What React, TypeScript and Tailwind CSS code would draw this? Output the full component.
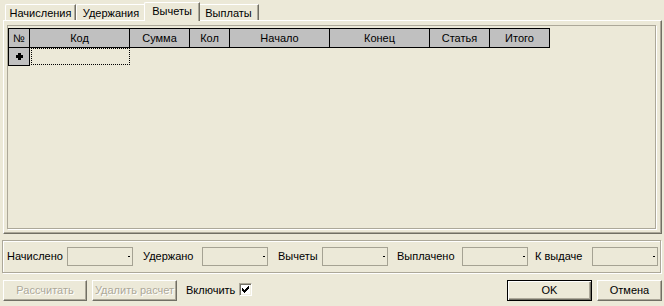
import React from "react";

const cols = [
  { t: "Код", w: "w-[100px]" },
  { t: "Сумма", w: "w-[60px]" },
  { t: "Кол", w: "w-[40px]" },
  { t: "Начало", w: "w-[100px]" },
  { t: "Конец", w: "w-[100px]" },
  { t: "Статья", w: "w-[60px]" },
  { t: "Итого", w: "w-[60px]" },
];

function Field({ label, lw, ml }: { label: string; lw: string; ml: string }) {
  return (
    <div className={`flex items-center ${ml}`}>
      <div className={`${lw} leading-[13px] whitespace-nowrap`}>{label}</div>
      <div className="w-[66px] h-[19px] border border-[#A5A293] flex items-center justify-end pr-[2px]">
        <div className="w-[2px] h-[1px] bg-black" />
      </div>
    </div>
  );
}

const btn =
  "h-[21px] flex items-center justify-center border border-t-white border-l-white border-r-[#716F64] border-b-[#716F64] shadow-[inset_-1px_-1px_0_#ACA899] leading-[13px]";

function Check() {
  const px: [number, number][] = [
    [6, 0],
    [5, 1], [6, 1],
    [0, 2], [4, 2], [5, 2], [6, 2],
    [0, 3], [1, 3], [3, 3], [4, 3], [5, 3],
    [0, 4], [1, 4], [2, 4], [3, 4], [4, 4],
    [1, 5], [2, 5], [3, 5],
    [2, 6],
  ];
  return (
    <svg width="7" height="7" viewBox="0 0 7 7" shapeRendering="crispEdges">
      {px.map(([x, y], i) => (
        <rect key={i} x={x} y={y} width="1" height="1" fill="#000" />
      ))}
    </svg>
  );
}

export default function App() {
  return (
    <div className="w-[664px] h-[306px] bg-[#ECE9D8] font-['Liberation_Sans',Arial,sans-serif] text-[11px] text-black overflow-hidden flex flex-col">
      {/* Tabs */}
      <div className="relative z-10 flex items-end h-[20px] pl-[5px]">
        <div className="w-[71px] h-[16px] border-t border-l border-white border-r border-r-[#716F64] shadow-[inset_-1px_0_0_#ACA899] rounded-tl-[2px] pt-[2px] leading-[13px] text-center">
          Начисления
        </div>
        <div className="w-[70px] h-[16px] border-t border-l border-white border-r border-r-[#716F64] shadow-[inset_-1px_0_0_#ACA899] rounded-tl-[2px] pt-[2px] leading-[13px] text-center">
          Удержания
        </div>
        <div className="relative z-10 w-[56px] -mx-[2px] -mb-[1px] h-[19px] bg-[#ECE9D8] border-t border-l border-white border-r border-r-[#716F64] shadow-[inset_-1px_0_0_#ACA899] rounded-tl-[2px] pt-[2px] leading-[13px] text-center">
          Вычеты
        </div>
        <div className="w-[61px] h-[16px] border-t border-l border-white border-r border-r-[#716F64] shadow-[inset_-1px_0_0_#ACA899] rounded-tl-[2px] pt-[2px] leading-[13px] text-center">
          Выплаты
        </div>
      </div>

      {/* Tab sheet */}
      <div className="ml-[3px] w-[659px] h-[214px] border-t border-l border-white border-r border-b border-r-[#716F64] border-b-[#716F64] shadow-[inset_-1px_-1px_0_#ACA899] pl-[3px] pt-[4px]">
        <div className="w-[649px] h-[204px] border border-[#ACA899] shadow-[1px_1px_0_#fff] pt-[2px]">
          <div className="flex flex-col items-start">
            {/* header */}
            <div className="flex border-l border-t border-black bg-[#C0C0C0]">
              <div className="w-[21px] h-[19px] border-r border-b border-black flex items-center justify-center leading-[13px]">
                №
              </div>
              {cols.map((c) => (
                <div
                  key={c.t}
                  className={`${c.w} h-[19px] border-r border-b border-black flex items-center justify-center leading-[13px]`}
                >
                  {c.t}
                </div>
              ))}
            </div>
            {/* row */}
            <div className="flex border-l border-black">
              <div className="w-[21px] h-[18px] bg-[#C0C0C0] border-r border-b border-black flex items-center justify-center">
                <svg width="7" height="7" viewBox="0 0 7 7" shapeRendering="crispEdges">
                  <rect x="2" y="0" width="3" height="7" fill="#000" />
                  <rect x="0" y="2" width="7" height="3" fill="#000" />
                </svg>
              </div>
              <div className="w-[100px] h-[18px] pl-[1px] pb-[1px]">
                <div className="w-[99px] h-[17px] border border-dotted border-black" />
              </div>
            </div>
          </div>
        </div>
      </div>

      {/* Totals group */}
      <div className="mt-[6px] ml-[2px] w-[659px] h-[33px] border border-[#ACA899] shadow-[inset_1px_1px_0_#fff,1px_1px_0_#fff] flex items-center pl-[4px]">
        <Field label="Начислено" lw="w-[60px]" ml="ml-0" />
        <Field label="Удержано" lw="w-[59px]" ml="ml-[10px]" />
        <Field label="Вычеты" lw="w-[44px]" ml="ml-[10px]" />
        <Field label="Выплачено" lw="w-[65px]" ml="ml-[9px]" />
        <Field label="К выдаче" lw="w-[57px]" ml="ml-[7px]" />
      </div>

      {/* Buttons */}
      <div className="mt-[7px] flex items-start h-[21px]">
        <div className={`${btn} ml-[3px] w-[84px] text-[#ACA899] [text-shadow:1px_1px_0_#fff]`}>
          Рассчитать
        </div>
        <div className={`${btn} ml-[5px] w-[85px] text-[#ACA899] [text-shadow:1px_1px_0_#fff]`}>
          Удалить расчет
        </div>
        <div className="ml-[9px] h-[21px] flex items-center leading-[13px]">Включить</div>
        <div className="ml-[4px] mt-[3px] w-[13px] h-[13px] bg-white border border-t-[#ACA899] border-l-[#ACA899] border-r-white border-b-white shadow-[inset_1px_1px_0_#716F64,inset_-1px_-1px_0_#F1EFE2] flex items-center justify-center">
          <Check />
        </div>
        <div className="ml-auto w-[85px] h-[21px] border border-black flex items-center justify-center shadow-[inset_1px_1px_0_#fff,inset_-1px_-1px_0_#716F64,inset_-2px_-2px_0_#ACA899] leading-[13px]">
          OK
        </div>
        <div className={`${btn} ml-[5px] mr-[2px] w-[65px]`}>Отмена</div>
      </div>
    </div>
  );
}
